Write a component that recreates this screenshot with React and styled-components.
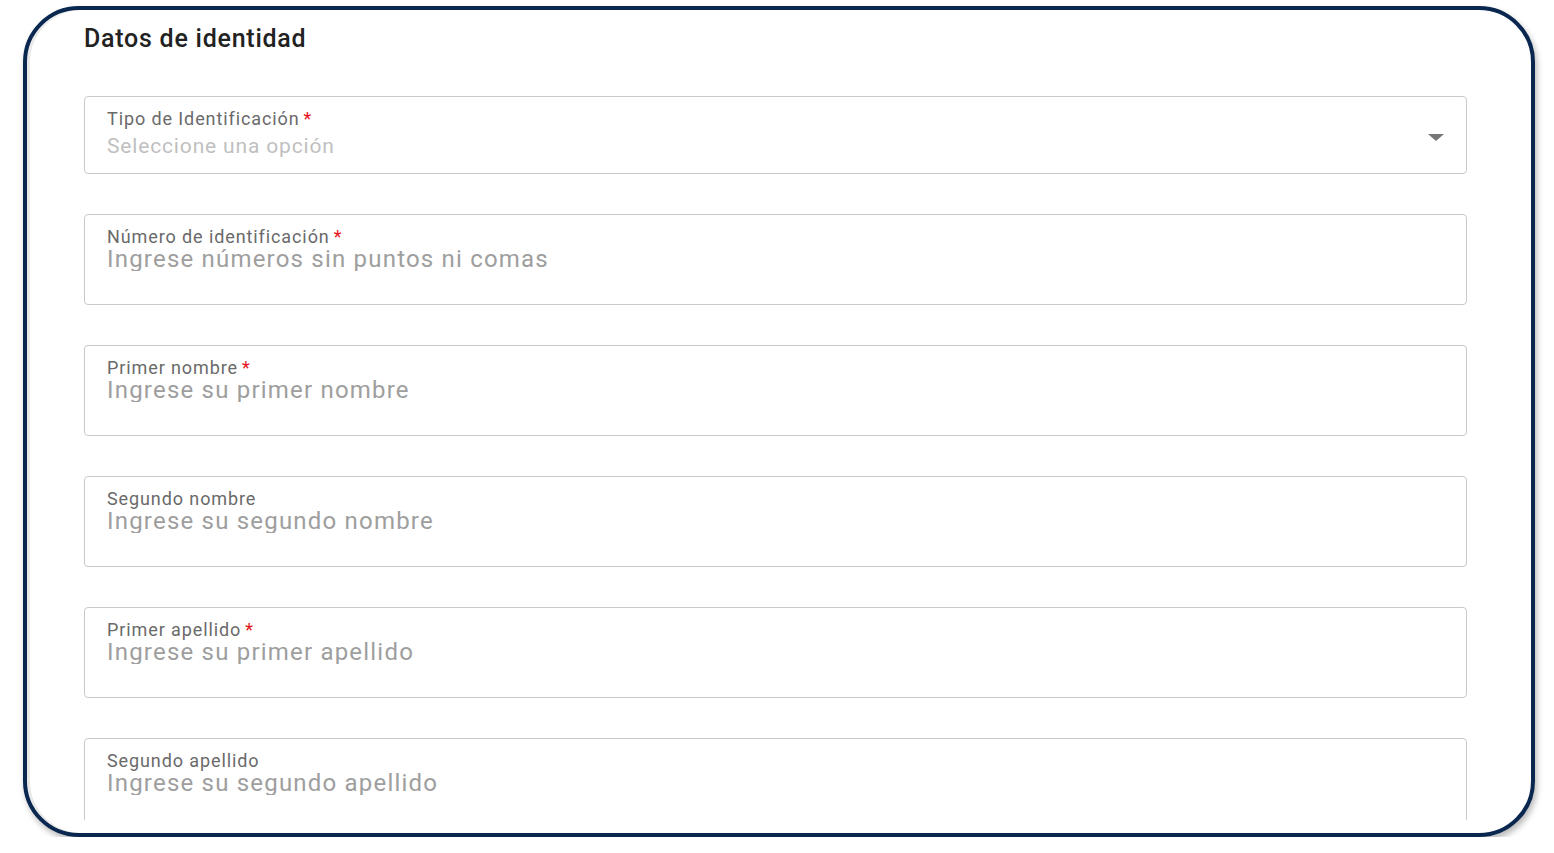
import React from "react";
import styled, { createGlobalStyle } from "styled-components";

const GlobalStyle = createGlobalStyle`
  html, body {
    margin: 0;
    padding: 0;
    background: #ffffff;
    font-family: Roboto, "Liberation Sans", Arial, sans-serif;
  }
`;

const Frame = styled.div`
  box-sizing: border-box;
  margin: 6px 0 0 23px;
  width: 1512px;
  height: 831px;
  border: 4px solid #0a2750;
  border-radius: 56px;
  background: #fff;
  overflow: hidden;
  padding-bottom: 13px;
  box-shadow: 2px 4px 6px rgba(0, 0, 0, 0.28), inset 3px 0 0 #e9e9e9;
`;

const Scroll = styled.div`
  height: 100%;
  overflow: hidden;
  padding: 15px 64px 0 57px;
  box-sizing: border-box;
`;

const Title = styled.h2`
  margin: 0;
  font-size: 25px;
  line-height: 28px;
  font-weight: 500;
  letter-spacing: 0.03em;
  color: #222;
`;

const Form = styled.div`
  display: flex;
  flex-direction: column;
  gap: 40px;
  margin-top: 43px;
`;

const Field = styled.label`
  display: flex;
  flex-direction: column;
  box-sizing: border-box;
  height: ${(p) => (p.$select ? "78px" : "91px")};
  padding: 12px 22px 0 22px;
  border: 1px solid #c9c9c9;
  border-radius: 4px;
  background: #fff;
  cursor: ${(p) => (p.$select ? "pointer" : "text")};
`;

const Label = styled.span`
  font-size: 18px;
  line-height: 20px;
  letter-spacing: 0.05em;
  color: #6a6a6a;
`;

const Star = styled.span`
  color: #e5141b;
  margin-left: 4px;
`;

const Input = styled.input`
  border: none;
  outline: none;
  padding: 0;
  margin: 0;
  height: 24px;
  font-family: inherit;
  font-size: 24px;
  line-height: 24px;
  letter-spacing: 0.05em;
  color: #333;
  background: transparent;

  &::placeholder {
    color: #9e9e9e;
  }
`;

const SelectRow = styled.div`
  display: flex;
  align-items: center;
  justify-content: space-between;
  margin-top: 5px;
`;

const SelectValue = styled.span`
  font-size: 21px;
  line-height: 24px;
  letter-spacing: 0.04em;
  color: #bfbfbf;
`;

const Caret = styled.span`
  width: 0;
  height: 0;
  margin-top: -18px;
  border-left: 8px solid transparent;
  border-right: 8px solid transparent;
  border-top: 7px solid #777;
`;

const fields = [
  {
    label: "Número de identificación",
    required: true,
    placeholder: "Ingrese números sin puntos ni comas",
  },
  { label: "Primer nombre", required: true, placeholder: "Ingrese su primer nombre" },
  { label: "Segundo nombre", required: false, placeholder: "Ingrese su segundo nombre" },
  { label: "Primer apellido", required: true, placeholder: "Ingrese su primer apellido" },
  { label: "Segundo apellido", required: false, placeholder: "Ingrese su segundo apellido" },
];

export default function App() {
  return (
    <>
      <GlobalStyle />
      <Frame>
        <Scroll>
          <Title>Datos de identidad</Title>
          <Form>
            <Field $select>
              <Label>
                Tipo de Identificación<Star>*</Star>
              </Label>
              <SelectRow>
                <SelectValue>Seleccione una opción</SelectValue>
                <Caret />
              </SelectRow>
            </Field>
            {fields.map((f) => (
              <Field key={f.label}>
                <Label>
                  {f.label}
                  {f.required && <Star>*</Star>}
                </Label>
                <Input placeholder={f.placeholder} />
              </Field>
            ))}
          </Form>
        </Scroll>
      </Frame>
    </>
  );
}
